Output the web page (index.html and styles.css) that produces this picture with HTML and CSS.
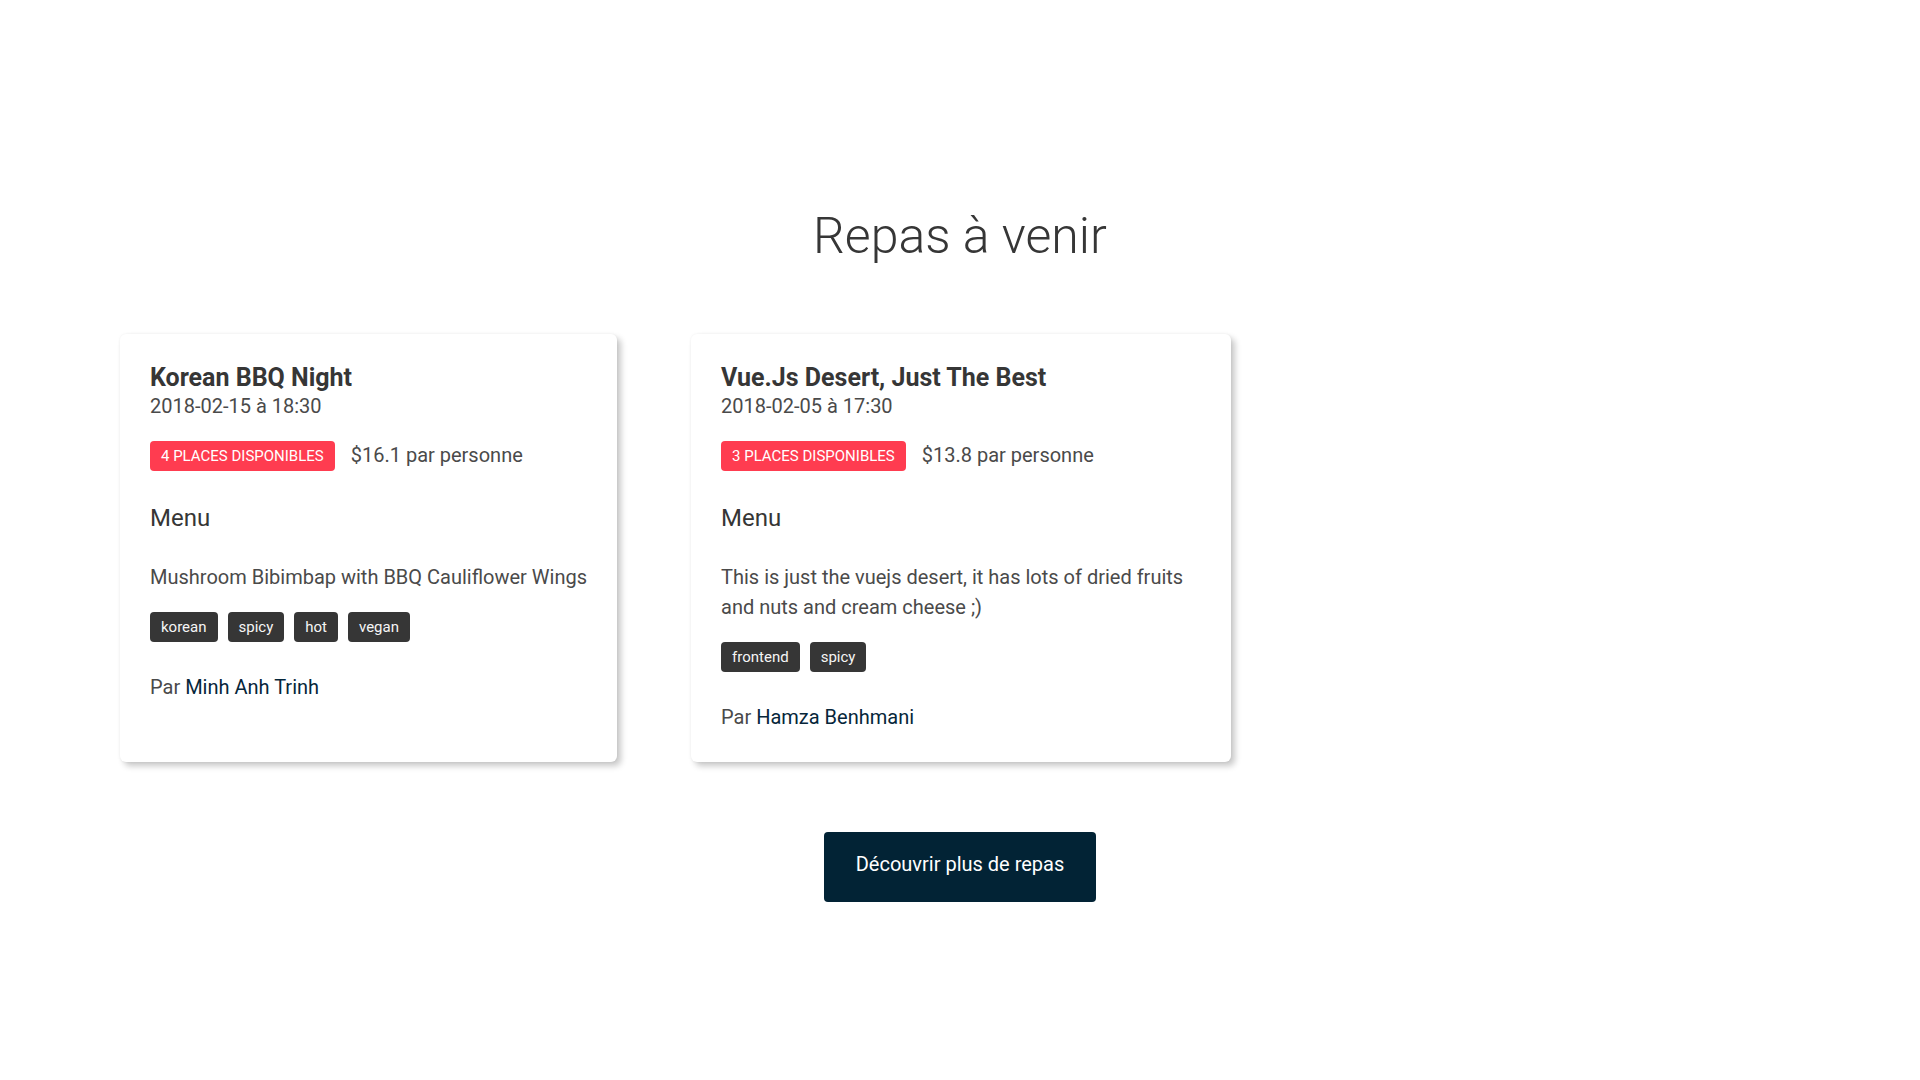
FILE: index.html
```html
<!DOCTYPE html>
<html lang="fr">
<head>
<meta charset="utf-8">
<title>Repas à venir</title>
<link rel="stylesheet" href="styles.css">
</head>
<body>
<main class="page">
  <h1 class="page-title">Repas à venir</h1>
  <section class="meals">
    <article class="card">
      <h2 class="card-title">Korean BBQ Night</h2>
      <p class="card-date">2018-02-15 à 18:30</p>
      <div class="card-info">
        <span class="badge">4 places disponibles</span>
        <span class="price">$16.1 par personne</span>
      </div>
      <h3 class="menu-title">Menu</h3>
      <p class="menu-desc">Mushroom Bibimbap with BBQ Cauliflower Wings</p>
      <div class="tags">
        <span class="tag">korean</span>
        <span class="tag">spicy</span>
        <span class="tag">hot</span>
        <span class="tag">vegan</span>
      </div>
      <p class="author">Par <a class="author-name" href="#">Minh Anh Trinh</a></p>
    </article>
    <article class="card">
      <h2 class="card-title">Vue.Js Desert, Just The Best</h2>
      <p class="card-date">2018-02-05 à 17:30</p>
      <div class="card-info">
        <span class="badge">3 places disponibles</span>
        <span class="price">$13.8 par personne</span>
      </div>
      <h3 class="menu-title">Menu</h3>
      <p class="menu-desc">This is just the vuejs desert, it has lots of dried fruits and nuts and cream cheese ;)</p>
      <div class="tags">
        <span class="tag">frontend</span>
        <span class="tag">spicy</span>
      </div>
      <p class="author">Par <a class="author-name" href="#">Hamza Benhmani</a></p>
    </article>
  </section>
  <div class="actions">
    <button class="more-btn" type="button">Découvrir plus de repas</button>
  </div>
</main>
</body>
</html>
```
FILE: styles.css
```css
* { box-sizing: border-box; }
html, body {
  margin: 0;
  padding: 0;
  background: #fff;
}
body {
  font-family: Roboto, "Liberation Sans", sans-serif;
  color: #4a4a4a;
  font-size: 20px;
}
.page {
  padding-top: 209px;
}
.page-title {
  margin: 0;
  text-align: center;
  font-size: 50px;
  font-weight: 300;
  line-height: 55px;
  color: #363636;
}
.meals {
  display: flex;
  align-items: stretch;
  gap: 74px;
  padding-left: 120px;
  margin-top: 70px;
}
.card {
  max-width: 540px;
  background: #fff;
  border-radius: 6px;
  padding: 30px;
  box-shadow: 4px 4px 6px rgba(0, 0, 0, 0.22), 0 0 3px rgba(0, 0, 0, 0.06);
}
.card-title {
  margin: 0;
  font-size: 25px;
  font-weight: 700;
  line-height: 27px;
  color: #363636;
}
.card-date {
  margin: 0;
  font-size: 20px;
  line-height: 30px;
}
.card-info {
  display: flex;
  align-items: center;
  gap: 16px;
  margin-top: 20px;
  height: 30px;
}
.badge {
  display: inline-flex;
  align-items: center;
  height: 30px;
  padding: 0 11px;
  background: #ff3c50;
  color: #fff;
  font-size: 15px;
  text-transform: uppercase;
  border-radius: 4px;
}
.price {
  font-size: 20px;
  line-height: 30px;
  padding-bottom: 3px;
}
.menu-title {
  margin: 32px 0 0;
  font-size: 24px;
  font-weight: 400;
  line-height: 30px;
  color: #363636;
}
.menu-desc {
  margin: 29px 0 0;
  font-size: 20px;
  line-height: 30px;
}
.tags {
  display: flex;
  gap: 10px;
  margin-top: 20px;
}
.tag {
  display: inline-flex;
  align-items: center;
  height: 30px;
  padding: 0 11px;
  background: #363636;
  color: #f5f5f5;
  font-size: 15px;
  border-radius: 4px;
}
.author {
  margin: 30px 0 0;
  font-size: 20px;
  line-height: 30px;
}
.author-name {
  color: #06263a;
  text-decoration: none;
}
.actions {
  display: flex;
  justify-content: center;
  margin-top: 70px;
}
.more-btn {
  font-family: Roboto, "Liberation Sans", sans-serif;
  font-size: 20px;
  height: 70px;
  padding: 0 32px 7px;
  background: #022335;
  color: #fff;
  border: none;
  border-radius: 4px;
  cursor: pointer;
}
```
